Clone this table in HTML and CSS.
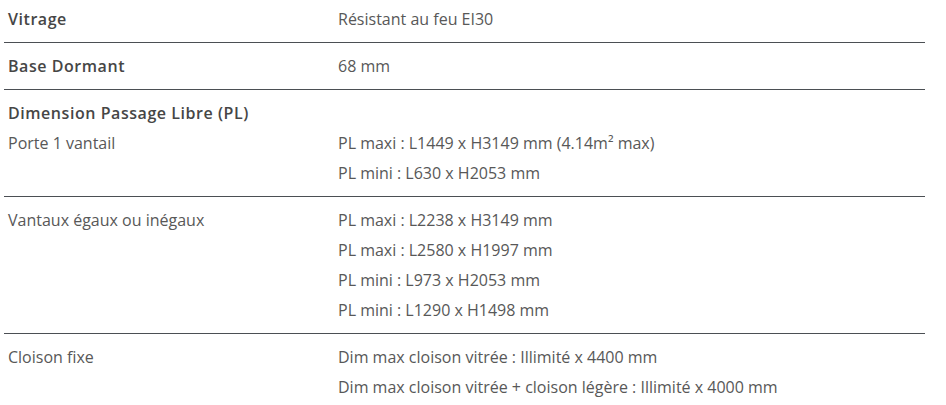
FILE: index.html
```html
<!DOCTYPE html>
<html lang="fr">
<head>
<meta charset="utf-8">
<title>Caractéristiques</title>
<link rel="stylesheet" href="styles.css">
</head>
<body>
<div class="specs">
  <div class="row first">
    <div class="label strong">Vitrage</div>
    <div class="values"><div>Résistant au feu EI30</div></div>
  </div>
  <div class="row">
    <div class="label strong">Base Dormant</div>
    <div class="values"><div>68 mm</div></div>
  </div>
  <div class="row group">
    <div class="group-title strong">Dimension Passage Libre (PL)</div>
    <div class="label">Porte 1 vantail</div>
    <div class="values">
      <div>PL maxi : L1449 x H3149 mm (4.14m² max)</div>
      <div>PL mini : L630 x H2053 mm</div>
    </div>
  </div>
  <div class="row">
    <div class="label">Vantaux égaux ou inégaux</div>
    <div class="values">
      <div>PL maxi : L2238 x H3149 mm</div>
      <div>PL maxi : L2580 x H1997 mm</div>
      <div>PL mini : L973 x H2053 mm</div>
      <div>PL mini : L1290 x H1498 mm</div>
    </div>
  </div>
  <div class="row last">
    <div class="label">Cloison fixe</div>
    <div class="values">
      <div>Dim max cloison vitrée : Illimité x 4400 mm</div>
      <div>Dim max cloison vitrée + cloison légère : Illimité x 4000 mm</div>
    </div>
  </div>
</div>
</body>
</html>
```
FILE: styles.css
```css
html, body {
  margin: 0;
  background: #ffffff;
}
body {
  padding: 4px 0 0 4px;
  font-family: "Open Sans", "Noto Sans", sans-serif;
  font-size: 16px;
  line-height: 30px;
  color: #585858;
}
.specs {
  width: 921px;
}
.row {
  display: grid;
  grid-template-columns: 334px 1fr;
  padding: 8px 0;
  border-bottom: 1px solid #4b4f54;
}
.row.first {
  padding-top: 0;
}
.row.last {
  border-bottom: none;
}
.label {
  padding-left: 4px;
}
.group-title {
  grid-column: 1 / 3;
  padding-left: 4px;
}
.strong {
  font-weight: 600;
  letter-spacing: 0.55px;
  color: #464646;
}
```
